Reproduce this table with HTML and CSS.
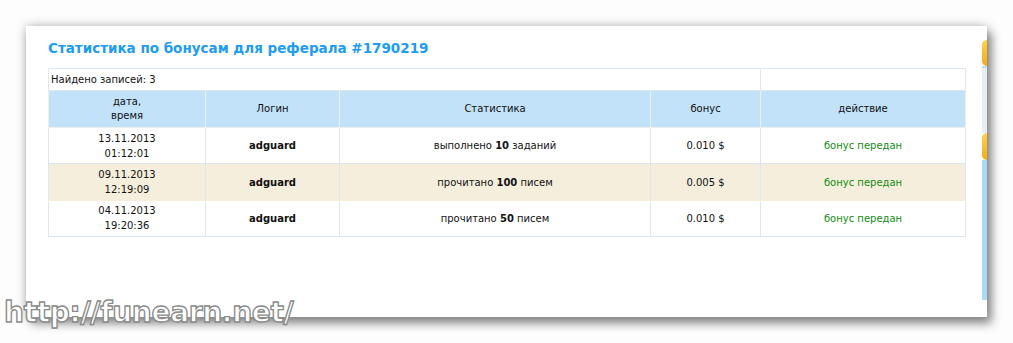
FILE: index.html
```html
<!DOCTYPE html>
<html>
<head>
<meta charset="utf-8">
<link rel="stylesheet" href="styles.css">
</head>
<body>
<div class="stage">
  <div class="window">
    <h1 class="title">Статистика по бонусам для реферала #1790219</h1>
    <table class="stats">
      <colgroup>
        <col class="c1"><col class="c2"><col class="c3"><col class="c4"><col class="c5">
      </colgroup>
      <tr class="found">
        <td colspan="4" class="left">Найдено записей: 3</td>
        <td></td>
      </tr>
      <tr class="head">
        <th>дата,<br>время</th>
        <th>Логин</th>
        <th>Статистика</th>
        <th>бонус</th>
        <th>действие</th>
      </tr>
      <tr>
        <td>13.11.2013<br>01:12:01</td>
        <td><b>adguard</b></td>
        <td>выполнено <b>10</b> заданий</td>
        <td>0.010 $</td>
        <td class="ok">бонус передан</td>
      </tr>
      <tr class="alt">
        <td>09.11.2013<br>12:19:09</td>
        <td><b>adguard</b></td>
        <td>прочитано <b>100</b> писем</td>
        <td>0.005 $</td>
        <td class="ok">бонус передан</td>
      </tr>
      <tr>
        <td>04.11.2013<br>19:20:36</td>
        <td><b>adguard</b></td>
        <td>прочитано <b>50</b> писем</td>
        <td>0.010 $</td>
        <td class="ok">бонус передан</td>
      </tr>
    </table>
    <div class="edge">
      <span class="pill pill-a"></span>
      <span class="gap"></span>
      <span class="pill pill-b"></span>
      <span class="strip"></span>
    </div>
  </div>
  <div class="watermark">http://funearn.net/</div>
</div>
</body>
</html>
```

FILE: styles.css
```css
html, body {
  margin: 0;
  padding: 0;
}
body {
  width: 1013px;
  height: 343px;
  overflow: hidden;
  background: #fdfdfd;
  font-family: "DejaVu Sans", Verdana, sans-serif;
}
.stage {
  position: relative;
  height: 343px;
  padding: 26px 0 0 26px;
  box-sizing: border-box;
}
.window {
  position: relative;
  width: 961px;
  height: 291px;
  background: #ffffff;
  box-sizing: border-box;
  padding: 12px 22px 0 22px;
  box-shadow: 0 0 10px rgba(0, 0, 0, 0.28), 5px 7px 9px rgba(0, 0, 0, 0.38);
}
.title {
  margin: 0 0 10px 0;
  font-size: 13.5px;
  line-height: 20px;
  font-weight: bold;
  color: #1d9cf0;
  letter-spacing: 0;
}
.stats {
  width: 917px;
  border-collapse: collapse;
  table-layout: fixed;
  font-size: 10px;
  color: #111;
}
.c1 { width: 157px; }
.c2 { width: 134px; }
.c3 { width: 311px; }
.c4 { width: 110px; }
.c5 { width: 205px; }
.stats td, .stats th {
  border: 1px solid #dde7f0;
  text-align: center;
  vertical-align: middle;
  padding: 0 3px;
  line-height: 15px;
  height: 35.4px;
}
.stats th {
  font-weight: normal;
  background: #c1e2f8;
  border-color: #eef0e8;
  line-height: 14px;
  height: 36px;
}
.stats .found td {
  height: 21px;
  text-align: left;
}
.stats .found td.left {
  padding-left: 2px;
}
.stats tr.alt td {
  background: #f5eedd;
  border-top-color: #f5eedd;
  border-bottom-color: #f5eedd;
}
.stats td b {
  font-weight: bold;
}
.stats .ok {
  color: #128c12;
}
.edge {
  position: absolute;
  top: 14px;
  right: 0;
  width: 5px;
  height: 260px;
  display: flex;
  flex-direction: column;
}
.pill {
  display: block;
  height: 26px;
  border-radius: 6px 0 0 6px;
  background: linear-gradient(#ffd24a, #f7aa10);
}
.gap {
  display: block;
  height: 65px;
  background: #e9eef2;
  border-top: 2px solid #b8def3;
}
.pill-b {
  height: 27px;
}
.strip {
  display: block;
  flex: 1;
  background: #a6dcf5;
}
.watermark {
  position: absolute;
  left: 4px;
  top: 296px;
  font-family: "DejaVu Sans", Verdana, sans-serif;
  font-weight: bold;
  font-size: 28px;
  line-height: 34px;
  letter-spacing: -0.3px;
  color: #ffffff;
  -webkit-text-stroke: 1.3px #8a8a8a;
  text-shadow: 0 0 1px rgba(0, 0, 0, 0.2);
}
```
